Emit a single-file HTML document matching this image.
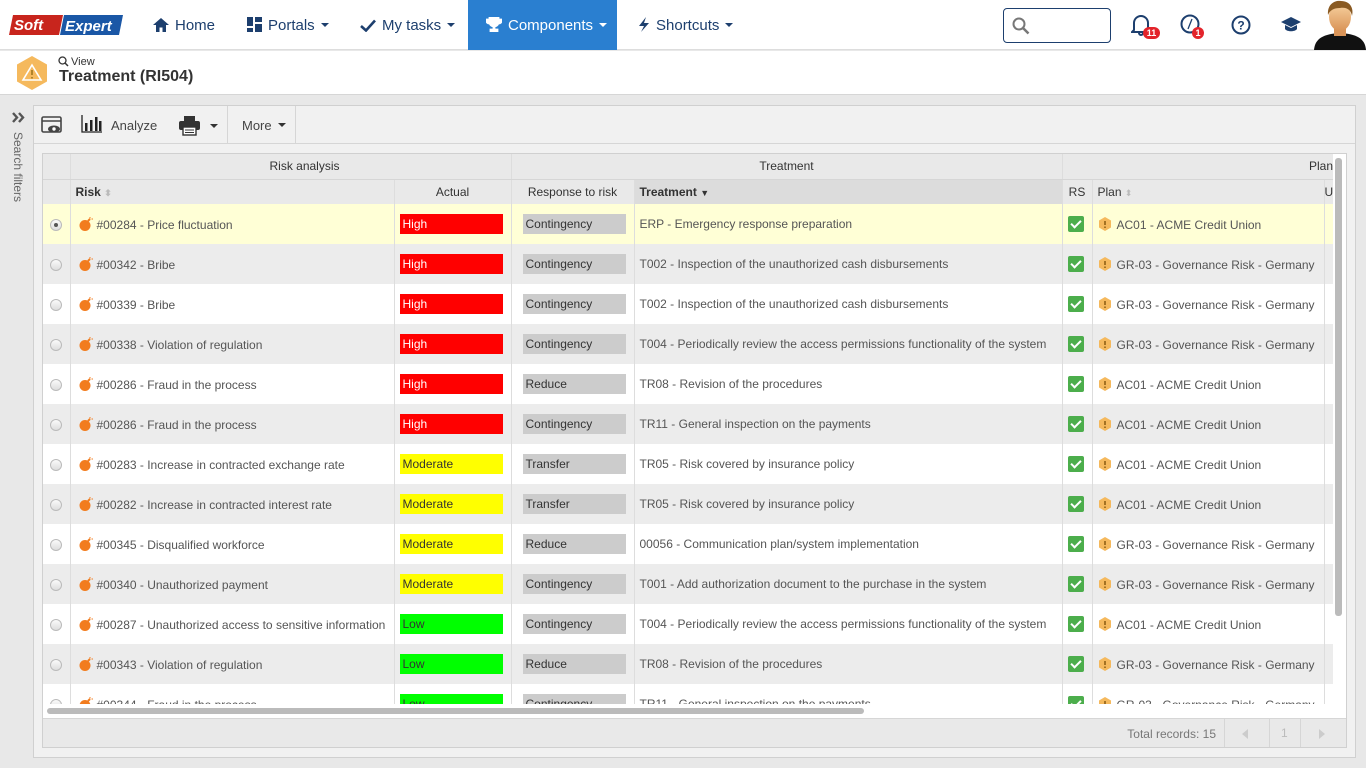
<!DOCTYPE html>
<html><head><meta charset="utf-8"><style>
*{box-sizing:border-box;margin:0;padding:0}
body{width:1366px;height:768px;overflow:hidden;background:#e8e8e8;font-family:"Liberation Sans",Arial,sans-serif;font-size:12px;color:#555;position:relative}
.top{position:absolute;left:0;top:0;width:1366px;height:50px;background:#fff;border-bottom:1px solid #ddd}
.nav{position:absolute;top:2px;height:48px;line-height:48px;font-size:15px;color:#1d3f6e;white-space:nowrap}
.nav svg{vertical-align:-2px;margin-right:6px}
.car{display:inline-block;border-left:4px solid transparent;border-right:4px solid transparent;border-top:4px solid currentColor;vertical-align:3px;margin-left:6px}
.bc{position:absolute;left:0;top:51px;width:1366px;height:44px;background:#fff;border-bottom:1px solid #d6d6d6}
.side{position:absolute;left:0;top:96px;width:28px;height:672px;background:#e8e8e8}
.panel{position:absolute;left:33px;top:105px;width:1323px;height:653px;background:#f1f1f1;border:1px solid #d0d0d0}
.tb{position:absolute;left:0;top:0;width:1321px;height:38px;border-bottom:1px solid #d6d6d6}
.grid{position:absolute;left:8px;top:47px;width:1305px;height:595px;background:#fff;border:1px solid #d0d0d0;overflow:hidden}
table{border-collapse:collapse;table-layout:fixed;position:absolute;left:0;top:0}
td,th{white-space:nowrap;overflow:hidden;border-left:1px solid #ddd;font-weight:normal}
th{height:25px;background:#e9e9e9;color:#333;font-size:12px;border-bottom:1px solid #d6d6d6}
td{height:40px;font-size:12px;color:#555;padding-left:8px}
tr.y td{background:#ffffd6}
tr.g td{background:#ececec}
tr.w td{background:#fff}
.b{display:inline-block;width:103px;height:20px;line-height:20px;padding-left:3px;color:#fff}
.H{background:#f00}.M{background:#ff0;color:#333}.L{background:#0f0;color:#333}
.r{display:inline-block;width:103px;height:20px;line-height:20px;padding-left:3px;background:#ccc;color:#333;margin-left:3px}
.rad{display:inline-block;width:12px;height:12px;border-radius:50%;border:1px solid #bbb;background:linear-gradient(#fafafa,#ddd);margin-left:-1px;vertical-align:middle;position:relative}
.rad.on:after{content:"";position:absolute;left:3px;top:3px;width:4px;height:4px;border-radius:50%;background:#555}
.bomb{display:inline-block;width:14px;height:14px;vertical-align:-2px;margin-right:4px}
.ck{display:inline-block;width:16px;height:16px;background:#4cae4c;border-radius:2px;vertical-align:middle;position:relative}
.ck:after{content:"";position:absolute;left:5px;top:2px;width:4px;height:8px;border:solid #fff;border-width:0 2px 2px 0;transform:rotate(45deg)}
.pi{display:inline-block;width:14px;height:14px;vertical-align:-2px;margin-right:5px}
</style></head><body>
<div class="top">
 <svg style="position:absolute;left:9px;top:13px" width="114" height="24" viewBox="0 0 114 24">
  <path d="M4 2 H54 L50 22 H0 Z" fill="#c8251d"/><path d="M55 2 H114 L110 22 H51 Z" fill="#1a57a6"/>
  <text x="5" y="17" font-family="Liberation Sans" font-weight="bold" font-style="italic" font-size="15" fill="#fff">Soft</text>
  <text x="56" y="18" font-family="Liberation Sans" font-weight="bold" font-style="italic" font-size="15" fill="#fff">Expert</text>
 </svg>
 <div class="nav" style="left:153px"><svg width="16" height="14" viewBox="0 0 16 14"><path d="M8 0 L16 7 H13 V14 H9.5 V9.5 H6.5 V14 H3 V7 H0 Z" fill="#1d3f6e"/></svg>Home</div>
 <div class="nav" style="left:247px"><svg width="15" height="15" viewBox="0 0 15 15" fill="#1d3f6e"><rect x="0" y="0" width="6" height="9"/><rect x="8" y="0" width="7" height="5"/><rect x="8" y="7" width="7" height="8"/><rect x="0" y="11" width="6" height="4"/></svg>Portals<span class="car"></span></div>
 <div class="nav" style="left:360px"><svg width="16" height="13" viewBox="0 0 16 13"><path d="M1 7 L6 11.5 L15 1.5" stroke="#1d3f6e" stroke-width="2.6" fill="none"/></svg>My tasks<span class="car"></span></div>
 <div class="nav" style="left:468px;top:0;height:50px;line-height:52px;width:149px;background:#2a7fd0;color:#fff;padding-left:18px"><svg width="16" height="15" viewBox="0 0 16 15"><path d="M3 0 H13 V5 A5 5 0 0 1 9 10 V12 H12 V15 H4 V12 H7 V10 A5 5 0 0 1 3 5 Z M3 2 H0 V4 A3 3 0 0 0 3 7 M13 2 H16 V4 A3 3 0 0 1 13 7" fill="#fff" stroke="#fff" stroke-width="0.8"/></svg>Components<span class="car"></span></div>
 <div class="nav" style="left:638px"><svg width="12" height="15" viewBox="0 0 12 15"><path d="M8 0 L1 9 H6 L3 15 L11 6 H6 Z" fill="#1d3f6e"/></svg>Shortcuts<span class="car"></span></div>
 <div style="position:absolute;left:1003px;top:8px;width:108px;height:35px;border:1px solid #1d3f6e;border-radius:4px"><svg style="position:absolute;left:8px;top:8px" width="18" height="18" viewBox="0 0 18 18"><circle cx="7" cy="7" r="5.5" stroke="#777" stroke-width="2" fill="none"/><path d="M11 11 L16.5 16.5" stroke="#777" stroke-width="2.5"/></svg></div>
 <svg style="position:absolute;left:1131px;top:14px" width="20" height="22" viewBox="0 0 20 22"><path d="M3 16 V9 A7 7 0 0 1 17 9 V16 L19 18 H1 Z M8 19 A2 2 0 0 0 12 19" stroke="#1d3f6e" stroke-width="2" fill="none"/></svg>
 <div style="position:absolute;left:1143px;top:27px;width:17px;height:12px;border-radius:6px;background:#e3242b;color:#fff;font-size:9px;font-weight:bold;text-align:center;line-height:12px">11</div>
 <svg style="position:absolute;left:1180px;top:14px" width="21" height="21" viewBox="0 0 21 21"><circle cx="10" cy="10" r="8.5" stroke="#1d3f6e" stroke-width="2" fill="none"/><path d="M12 5 L8 15 L10 10 Z" fill="#1d3f6e" stroke="#1d3f6e" stroke-width="1.3"/></svg>
 <div style="position:absolute;left:1192px;top:27px;width:12px;height:12px;border-radius:6px;background:#e3242b;color:#fff;font-size:9px;font-weight:bold;text-align:center;line-height:12px">1</div>
 <svg style="position:absolute;left:1231px;top:15px" width="20" height="20" viewBox="0 0 20 20"><circle cx="10" cy="10" r="8.5" stroke="#1d3f6e" stroke-width="2" fill="none"/><text x="10" y="14.5" text-anchor="middle" font-family="Liberation Sans" font-weight="bold" font-size="12" fill="#1d3f6e">?</text></svg>
 <svg style="position:absolute;left:1281px;top:17px" width="20" height="16" viewBox="0 0 20 16"><path d="M10 0 L20 5 L10 10 L0 5 Z M4 8 V12 C6 15 14 15 16 12 V8 L10 11 Z" fill="#1d3f6e"/></svg>
 <svg style="position:absolute;left:1314px;top:0" width="52" height="50" viewBox="0 0 52 50"><defs><linearGradient id="sk" x1="0" x2="0" y1="0" y2="1"><stop offset="0" stop-color="#f8d2a0"/><stop offset="1" stop-color="#d99458"/></linearGradient></defs><path d="M0 50 C1 38 10 34 26 33 C42 34 51 38 52 50 Z" fill="#111"/><rect x="20" y="26" width="12" height="10" fill="#d99458"/><ellipse cx="26" cy="17" rx="11" ry="14" fill="url(#sk)"/><path d="M14 15 C13 3 22 0 27 1 C36 1 40 8 38 16 C37 10 33 7 26 8 C20 8 16 10 14 15Z" fill="#8a5a22"/></svg>
</div>
<div class="bc">
 <svg style="position:absolute;left:16px;top:5px" width="32" height="34" viewBox="0 0 32 34"><path d="M16 0 L31 8.5 V25.5 L16 34 L1 25.5 V8.5 Z" fill="#f5b95d"/><path d="M16 9 L25 24 H7 Z" fill="none" stroke="#fff" stroke-width="1.6"/><path d="M16 14 V19 M16 21 V22.5" stroke="#a0761e" stroke-width="1.6"/></svg>
 <svg style="position:absolute;left:58px;top:5px" width="11" height="11" viewBox="0 0 11 11"><circle cx="4.5" cy="4.5" r="3.5" stroke="#333" stroke-width="1.3" fill="none"/><path d="M7 7 L10 10" stroke="#333" stroke-width="1.5"/></svg>
 <div style="position:absolute;left:71px;top:5px;font-size:11px;color:#333">View</div>
 <div style="position:absolute;left:59px;top:17px;font-size:16px;font-weight:bold;color:#333">Treatment (RI504)</div>
</div>
<div class="side">
 <svg style="position:absolute;left:12px;top:16px" width="13" height="11" viewBox="0 0 13 11"><path d="M1 1 L5 5.5 L1 10 M7 1 L11 5.5 L7 10" stroke="#555" stroke-width="2.4" fill="none"/></svg>
 <div style="position:absolute;left:11px;top:36px;writing-mode:vertical-rl;font-size:12px;color:#666">Search filters</div>
</div>
<div class="panel">
 <div class="tb">
  <svg style="position:absolute;left:7px;top:10px" width="21" height="19" viewBox="0 0 21 19"><rect x="1" y="1" width="19" height="15" rx="1.5" stroke="#444" stroke-width="1.6" fill="none"/><path d="M1 5 H20" stroke="#444" stroke-width="1.5"/><ellipse cx="13" cy="13" rx="6" ry="3.5" fill="#444"/><circle cx="13" cy="13" r="1.7" fill="#fff"/></svg>
  <svg style="position:absolute;left:47px;top:9px" width="22" height="18" viewBox="0 0 22 18"><path d="M1 0 V17 H21" stroke="#222" stroke-width="1.3" fill="none"/><rect x="4" y="8" width="2.5" height="8" fill="#222"/><rect x="9" y="5" width="2.5" height="11" fill="#222"/><rect x="14" y="2" width="2.5" height="14" fill="#222"/><rect x="18" y="6" width="2.5" height="10" fill="#222"/></svg>
  <div style="position:absolute;left:77px;top:12px;font-size:13px;color:#444">Analyze</div>
  <svg style="position:absolute;left:145px;top:10px" width="21" height="20" viewBox="0 0 21 20"><rect x="5" y="0" width="11" height="5" fill="#333"/><rect x="0" y="5" width="21" height="9" rx="2" fill="#333"/><rect x="4" y="11" width="13" height="8" fill="#fff" stroke="#333" stroke-width="1.4"/><path d="M6 14 H15 M6 16.5 H15" stroke="#333"/></svg>
  <span class="car" style="position:absolute;left:176px;top:18px;color:#333;margin:0"></span>
  <div style="position:absolute;left:193px;top:0;width:1px;height:38px;background:#d6d6d6"></div>
  <div style="position:absolute;left:208px;top:12px;font-size:13px;color:#444">More<span class="car" style="color:#333"></span></div>
  <div style="position:absolute;left:261px;top:0;width:1px;height:38px;background:#d6d6d6"></div>
 </div>
 <div class="grid">
  <table style="width:1290px">
   <colgroup><col style="width:27px"><col style="width:324px"><col style="width:117px"><col style="width:123px"><col style="width:428px"><col style="width:30px"><col style="width:232px"><col style="width:9px"></colgroup>
   <tr><th style="border-left:0"></th><th colspan="2" style="text-align:center;padding-left:28px">Risk analysis</th><th colspan="2" style="text-align:center">Treatment</th><th colspan="3" style="text-align:right;padding-right:0">Plan</th></tr>
   <tr><th style="border-left:0"></th><th style="text-align:left;padding-left:5px;font-weight:bold">Risk <span style="color:#bbb;font-size:9px">⬍</span></th><th>Actual</th><th>Response to risk</th><th style="text-align:left;padding-left:5px;font-weight:bold;background:#dcdcdc">Treatment <span style="font-size:9px">▼</span></th><th style="padding-left:0">RS</th><th style="text-align:left;padding-left:5px">Plan <span style="color:#bbb;font-size:9px">⬍</span></th><th>U</th></tr>
  </table>
  <div style="position:absolute;left:0;top:50px;width:1290px;height:500px;overflow:hidden">
  <table style="width:1290px">
   <colgroup><col style="width:27px"><col style="width:324px"><col style="width:117px"><col style="width:123px"><col style="width:428px"><col style="width:30px"><col style="width:232px"><col style="width:9px"></colgroup>
   <tr class="y"><td style="border-left:0"><span class="rad on"></span></td><td><svg class="bomb" viewBox="0 0 14 14"><circle cx="6" cy="8.5" r="5.5" fill="#f27c1e"/><path d="M9 4 L11 2" stroke="#f27c1e" stroke-width="2"/><path d="M11 0 V1.5 M12.5 2 H14" stroke="#f27c1e"/></svg>#00284 - Price fluctuation</td><td style="padding-left:5px"><span class="b H">High</span></td><td><span class="r">Contingency</span></td><td style="padding-left:5px">ERP - Emergency response preparation</td><td style="padding-left:5px"><span class="ck"></span></td><td style="padding-left:5px"><svg class="pi" viewBox="0 0 14 14"><path d="M7 0 L13 3.5 V10.5 L7 14 L1 10.5 V3.5 Z" fill="#f5b95d"/><path d="M7 4 V8 M7 9.5 V11" stroke="#8a5a10" stroke-width="1.5"/></svg>AC01 - ACME Credit Union</td><td></td></tr>
   <tr class="g"><td style="border-left:0"><span class="rad"></span></td><td><svg class="bomb" viewBox="0 0 14 14"><circle cx="6" cy="8.5" r="5.5" fill="#f27c1e"/><path d="M9 4 L11 2" stroke="#f27c1e" stroke-width="2"/><path d="M11 0 V1.5 M12.5 2 H14" stroke="#f27c1e"/></svg>#00342 - Bribe</td><td style="padding-left:5px"><span class="b H">High</span></td><td><span class="r">Contingency</span></td><td style="padding-left:5px">T002 - Inspection of the unauthorized cash disbursements</td><td style="padding-left:5px"><span class="ck"></span></td><td style="padding-left:5px"><svg class="pi" viewBox="0 0 14 14"><path d="M7 0 L13 3.5 V10.5 L7 14 L1 10.5 V3.5 Z" fill="#f5b95d"/><path d="M7 4 V8 M7 9.5 V11" stroke="#8a5a10" stroke-width="1.5"/></svg>GR-03 - Governance Risk - Germany</td><td></td></tr>
   <tr class="w"><td style="border-left:0"><span class="rad"></span></td><td><svg class="bomb" viewBox="0 0 14 14"><circle cx="6" cy="8.5" r="5.5" fill="#f27c1e"/><path d="M9 4 L11 2" stroke="#f27c1e" stroke-width="2"/><path d="M11 0 V1.5 M12.5 2 H14" stroke="#f27c1e"/></svg>#00339 - Bribe</td><td style="padding-left:5px"><span class="b H">High</span></td><td><span class="r">Contingency</span></td><td style="padding-left:5px">T002 - Inspection of the unauthorized cash disbursements</td><td style="padding-left:5px"><span class="ck"></span></td><td style="padding-left:5px"><svg class="pi" viewBox="0 0 14 14"><path d="M7 0 L13 3.5 V10.5 L7 14 L1 10.5 V3.5 Z" fill="#f5b95d"/><path d="M7 4 V8 M7 9.5 V11" stroke="#8a5a10" stroke-width="1.5"/></svg>GR-03 - Governance Risk - Germany</td><td></td></tr>
   <tr class="g"><td style="border-left:0"><span class="rad"></span></td><td><svg class="bomb" viewBox="0 0 14 14"><circle cx="6" cy="8.5" r="5.5" fill="#f27c1e"/><path d="M9 4 L11 2" stroke="#f27c1e" stroke-width="2"/><path d="M11 0 V1.5 M12.5 2 H14" stroke="#f27c1e"/></svg>#00338 - Violation of regulation</td><td style="padding-left:5px"><span class="b H">High</span></td><td><span class="r">Contingency</span></td><td style="padding-left:5px">T004 - Periodically review the access permissions functionality of the system</td><td style="padding-left:5px"><span class="ck"></span></td><td style="padding-left:5px"><svg class="pi" viewBox="0 0 14 14"><path d="M7 0 L13 3.5 V10.5 L7 14 L1 10.5 V3.5 Z" fill="#f5b95d"/><path d="M7 4 V8 M7 9.5 V11" stroke="#8a5a10" stroke-width="1.5"/></svg>GR-03 - Governance Risk - Germany</td><td></td></tr>
   <tr class="w"><td style="border-left:0"><span class="rad"></span></td><td><svg class="bomb" viewBox="0 0 14 14"><circle cx="6" cy="8.5" r="5.5" fill="#f27c1e"/><path d="M9 4 L11 2" stroke="#f27c1e" stroke-width="2"/><path d="M11 0 V1.5 M12.5 2 H14" stroke="#f27c1e"/></svg>#00286 - Fraud in the process</td><td style="padding-left:5px"><span class="b H">High</span></td><td><span class="r">Reduce</span></td><td style="padding-left:5px">TR08 - Revision of the procedures</td><td style="padding-left:5px"><span class="ck"></span></td><td style="padding-left:5px"><svg class="pi" viewBox="0 0 14 14"><path d="M7 0 L13 3.5 V10.5 L7 14 L1 10.5 V3.5 Z" fill="#f5b95d"/><path d="M7 4 V8 M7 9.5 V11" stroke="#8a5a10" stroke-width="1.5"/></svg>AC01 - ACME Credit Union</td><td></td></tr>
   <tr class="g"><td style="border-left:0"><span class="rad"></span></td><td><svg class="bomb" viewBox="0 0 14 14"><circle cx="6" cy="8.5" r="5.5" fill="#f27c1e"/><path d="M9 4 L11 2" stroke="#f27c1e" stroke-width="2"/><path d="M11 0 V1.5 M12.5 2 H14" stroke="#f27c1e"/></svg>#00286 - Fraud in the process</td><td style="padding-left:5px"><span class="b H">High</span></td><td><span class="r">Contingency</span></td><td style="padding-left:5px">TR11 - General inspection on the payments</td><td style="padding-left:5px"><span class="ck"></span></td><td style="padding-left:5px"><svg class="pi" viewBox="0 0 14 14"><path d="M7 0 L13 3.5 V10.5 L7 14 L1 10.5 V3.5 Z" fill="#f5b95d"/><path d="M7 4 V8 M7 9.5 V11" stroke="#8a5a10" stroke-width="1.5"/></svg>AC01 - ACME Credit Union</td><td></td></tr>
   <tr class="w"><td style="border-left:0"><span class="rad"></span></td><td><svg class="bomb" viewBox="0 0 14 14"><circle cx="6" cy="8.5" r="5.5" fill="#f27c1e"/><path d="M9 4 L11 2" stroke="#f27c1e" stroke-width="2"/><path d="M11 0 V1.5 M12.5 2 H14" stroke="#f27c1e"/></svg>#00283 - Increase in contracted exchange rate</td><td style="padding-left:5px"><span class="b M">Moderate</span></td><td><span class="r">Transfer</span></td><td style="padding-left:5px">TR05 - Risk covered by insurance policy</td><td style="padding-left:5px"><span class="ck"></span></td><td style="padding-left:5px"><svg class="pi" viewBox="0 0 14 14"><path d="M7 0 L13 3.5 V10.5 L7 14 L1 10.5 V3.5 Z" fill="#f5b95d"/><path d="M7 4 V8 M7 9.5 V11" stroke="#8a5a10" stroke-width="1.5"/></svg>AC01 - ACME Credit Union</td><td></td></tr>
   <tr class="g"><td style="border-left:0"><span class="rad"></span></td><td><svg class="bomb" viewBox="0 0 14 14"><circle cx="6" cy="8.5" r="5.5" fill="#f27c1e"/><path d="M9 4 L11 2" stroke="#f27c1e" stroke-width="2"/><path d="M11 0 V1.5 M12.5 2 H14" stroke="#f27c1e"/></svg>#00282 - Increase in contracted interest rate</td><td style="padding-left:5px"><span class="b M">Moderate</span></td><td><span class="r">Transfer</span></td><td style="padding-left:5px">TR05 - Risk covered by insurance policy</td><td style="padding-left:5px"><span class="ck"></span></td><td style="padding-left:5px"><svg class="pi" viewBox="0 0 14 14"><path d="M7 0 L13 3.5 V10.5 L7 14 L1 10.5 V3.5 Z" fill="#f5b95d"/><path d="M7 4 V8 M7 9.5 V11" stroke="#8a5a10" stroke-width="1.5"/></svg>AC01 - ACME Credit Union</td><td></td></tr>
   <tr class="w"><td style="border-left:0"><span class="rad"></span></td><td><svg class="bomb" viewBox="0 0 14 14"><circle cx="6" cy="8.5" r="5.5" fill="#f27c1e"/><path d="M9 4 L11 2" stroke="#f27c1e" stroke-width="2"/><path d="M11 0 V1.5 M12.5 2 H14" stroke="#f27c1e"/></svg>#00345 - Disqualified workforce</td><td style="padding-left:5px"><span class="b M">Moderate</span></td><td><span class="r">Reduce</span></td><td style="padding-left:5px">00056 - Communication plan/system implementation</td><td style="padding-left:5px"><span class="ck"></span></td><td style="padding-left:5px"><svg class="pi" viewBox="0 0 14 14"><path d="M7 0 L13 3.5 V10.5 L7 14 L1 10.5 V3.5 Z" fill="#f5b95d"/><path d="M7 4 V8 M7 9.5 V11" stroke="#8a5a10" stroke-width="1.5"/></svg>GR-03 - Governance Risk - Germany</td><td></td></tr>
   <tr class="g"><td style="border-left:0"><span class="rad"></span></td><td><svg class="bomb" viewBox="0 0 14 14"><circle cx="6" cy="8.5" r="5.5" fill="#f27c1e"/><path d="M9 4 L11 2" stroke="#f27c1e" stroke-width="2"/><path d="M11 0 V1.5 M12.5 2 H14" stroke="#f27c1e"/></svg>#00340 - Unauthorized payment</td><td style="padding-left:5px"><span class="b M">Moderate</span></td><td><span class="r">Contingency</span></td><td style="padding-left:5px">T001 - Add authorization document to the purchase in the system</td><td style="padding-left:5px"><span class="ck"></span></td><td style="padding-left:5px"><svg class="pi" viewBox="0 0 14 14"><path d="M7 0 L13 3.5 V10.5 L7 14 L1 10.5 V3.5 Z" fill="#f5b95d"/><path d="M7 4 V8 M7 9.5 V11" stroke="#8a5a10" stroke-width="1.5"/></svg>GR-03 - Governance Risk - Germany</td><td></td></tr>
   <tr class="w"><td style="border-left:0"><span class="rad"></span></td><td><svg class="bomb" viewBox="0 0 14 14"><circle cx="6" cy="8.5" r="5.5" fill="#f27c1e"/><path d="M9 4 L11 2" stroke="#f27c1e" stroke-width="2"/><path d="M11 0 V1.5 M12.5 2 H14" stroke="#f27c1e"/></svg>#00287 - Unauthorized access to sensitive information</td><td style="padding-left:5px"><span class="b L">Low</span></td><td><span class="r">Contingency</span></td><td style="padding-left:5px">T004 - Periodically review the access permissions functionality of the system</td><td style="padding-left:5px"><span class="ck"></span></td><td style="padding-left:5px"><svg class="pi" viewBox="0 0 14 14"><path d="M7 0 L13 3.5 V10.5 L7 14 L1 10.5 V3.5 Z" fill="#f5b95d"/><path d="M7 4 V8 M7 9.5 V11" stroke="#8a5a10" stroke-width="1.5"/></svg>AC01 - ACME Credit Union</td><td></td></tr>
   <tr class="g"><td style="border-left:0"><span class="rad"></span></td><td><svg class="bomb" viewBox="0 0 14 14"><circle cx="6" cy="8.5" r="5.5" fill="#f27c1e"/><path d="M9 4 L11 2" stroke="#f27c1e" stroke-width="2"/><path d="M11 0 V1.5 M12.5 2 H14" stroke="#f27c1e"/></svg>#00343 - Violation of regulation</td><td style="padding-left:5px"><span class="b L">Low</span></td><td><span class="r">Reduce</span></td><td style="padding-left:5px">TR08 - Revision of the procedures</td><td style="padding-left:5px"><span class="ck"></span></td><td style="padding-left:5px"><svg class="pi" viewBox="0 0 14 14"><path d="M7 0 L13 3.5 V10.5 L7 14 L1 10.5 V3.5 Z" fill="#f5b95d"/><path d="M7 4 V8 M7 9.5 V11" stroke="#8a5a10" stroke-width="1.5"/></svg>GR-03 - Governance Risk - Germany</td><td></td></tr>
   <tr class="w"><td style="border-left:0"><span class="rad"></span></td><td><svg class="bomb" viewBox="0 0 14 14"><circle cx="6" cy="8.5" r="5.5" fill="#f27c1e"/><path d="M9 4 L11 2" stroke="#f27c1e" stroke-width="2"/><path d="M11 0 V1.5 M12.5 2 H14" stroke="#f27c1e"/></svg>#00344 - Fraud in the process</td><td style="padding-left:5px"><span class="b L">Low</span></td><td><span class="r">Contingency</span></td><td style="padding-left:5px">TR11 - General inspection on the payments</td><td style="padding-left:5px"><span class="ck"></span></td><td style="padding-left:5px"><svg class="pi" viewBox="0 0 14 14"><path d="M7 0 L13 3.5 V10.5 L7 14 L1 10.5 V3.5 Z" fill="#f5b95d"/><path d="M7 4 V8 M7 9.5 V11" stroke="#8a5a10" stroke-width="1.5"/></svg>GR-03 - Governance Risk - Germany</td><td></td></tr>
  </table>
  </div>
  <div style="position:absolute;left:0;top:550px;width:1305px;height:14px;background:#fff"></div>
  <div style="position:absolute;left:4px;top:554px;width:817px;height:6px;border-radius:3px;background:#bbb"></div>
  <div style="position:absolute;left:1292px;top:4px;width:7px;height:458px;border-radius:3px;background:#bbb"></div>
  <div style="position:absolute;left:0;top:564px;width:1305px;height:30px;background:#e9e9e9;border-top:1px solid #d6d6d6">
   <div style="position:absolute;right:132px;top:8px;font-size:12px;color:#777">Total records: 15</div>
   <div style="position:absolute;left:1181px;top:0;width:1px;height:30px;background:#d6d6d6"></div>
   <div style="position:absolute;left:1226px;top:0;width:1px;height:30px;background:#d6d6d6"></div>
   <div style="position:absolute;left:1257px;top:0;width:1px;height:30px;background:#d6d6d6"></div>
   <div style="position:absolute;left:1199px;top:10px;border-right:6px solid #ccc;border-top:5px solid transparent;border-bottom:5px solid transparent"></div>
   <div style="position:absolute;left:1238px;top:7px;font-size:12px;color:#bbb">1</div>
   <div style="position:absolute;left:1276px;top:10px;border-left:6px solid #ccc;border-top:5px solid transparent;border-bottom:5px solid transparent"></div>
  </div>
 </div>
</div>
</body></html>
